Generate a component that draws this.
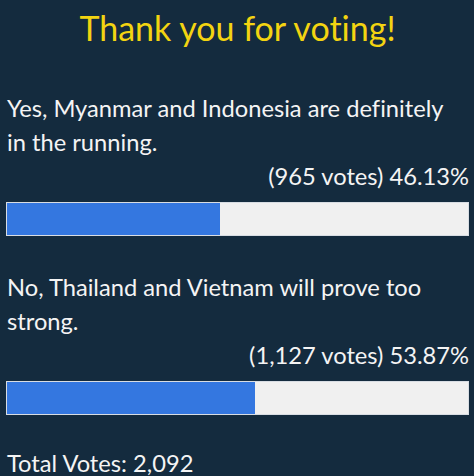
import React from 'react';

const options = [
  { label: 'Yes, Myanmar and Indonesia are definitely in the running.', votes: '965', pct: 46.13 },
  { label: 'No, Thailand and Vietnam will prove too strong.', votes: '1,127', pct: 53.87 },
];

export default function App() {
  return (
    <div className="w-[474px] h-[476px] overflow-hidden bg-[#142b3e] text-[#f4f4f4] font-['Lato',sans-serif] [font-variant-ligatures:none] pl-[6px] pr-[5px]">
      <h1 className="text-center text-[#f3d411] text-[34px] leading-[40px] pt-[8px]">Thank you for voting!</h1>

      <div className="mt-[43px]">
        {options.map((o, i) => (
          <div key={i} className="mb-[34px]">
            <p className="text-[23.7px] leading-[34px] pl-[1px] pr-[10px]">{o.label}</p>
            <p className="text-[23.7px] leading-[34px] text-right">
              ({o.votes} votes) {o.pct.toFixed(2)}%
            </p>
            <div className="mt-[9px] h-[34px] border border-[#d8dde3] bg-[#f0f0f0]">
              <div className="h-full bg-[#3477e0]" style={{ width: `${o.pct}%` }} />
            </div>
          </div>
        ))}
      </div>

      <p className="text-[23.7px] leading-[34px] pl-[1px] -mt-[3px]">Total Votes: 2,092</p>
    </div>
  );
}
